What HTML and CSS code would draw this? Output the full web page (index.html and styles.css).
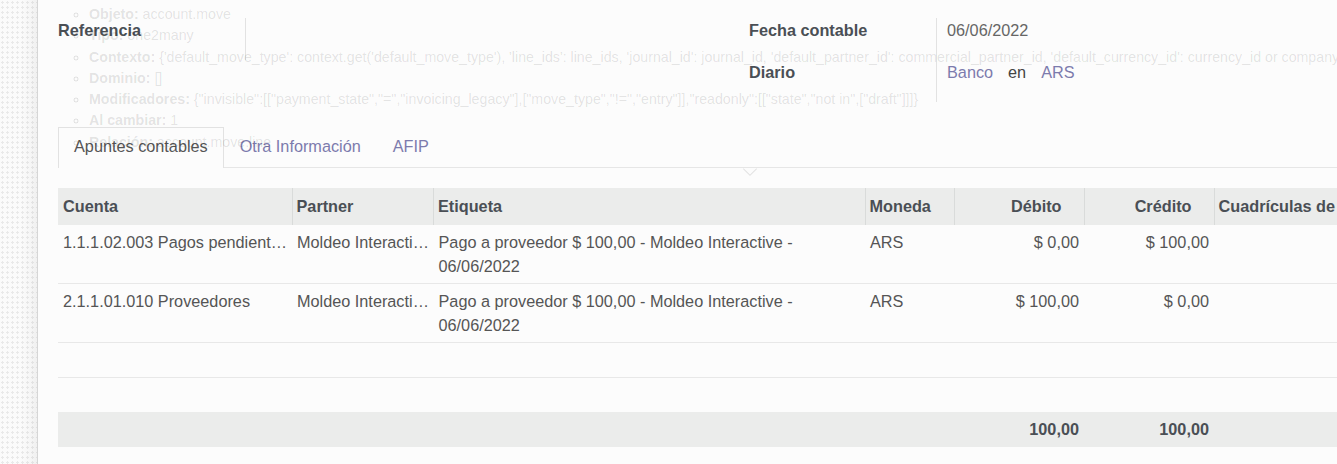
FILE: index.html
```html
<!DOCTYPE html>
<html lang="es">
<head>
    <meta charset="UTF-8">
    <title>Asiento contable</title>
    <link rel="stylesheet" href="styles.css">
</head>
<body>
    <div class="rail"></div>

    <main class="sheet">
        <div class="groups">
            <div class="group">
                <div class="field">
                    <div class="label">Referencia</div>
                    <div class="value"></div>
                </div>
            </div>
            <div class="group">
                <div class="field">
                    <div class="label">Fecha contable</div>
                    <div class="value muted">06/06/2022</div>
                </div>
                <div class="field">
                    <div class="label">Diario</div>
                    <div class="value"><a class="link">Banco</a><span class="sep">en</span><a class="link">ARS</a></div>
                </div>
            </div>
        </div>

        <ul class="tabs">
            <li class="tab active">Apuntes contables</li>
            <li class="tab">Otra Información</li>
            <li class="tab">AFIP</li>
        </ul>

        <table class="lines">
            <colgroup>
                <col style="width:234px">
                <col style="width:141.5px">
                <col style="width:431.5px">
                <col style="width:89px">
                <col style="width:130px">
                <col style="width:130px">
                <col style="width:260px">
            </colgroup>
            <thead>
                <tr>
                    <th>Cuenta</th>
                    <th>Partner</th>
                    <th>Etiqueta</th>
                    <th>Moneda</th>
                    <th class="num">Débito</th>
                    <th class="num">Crédito</th>
                    <th>Cuadrículas de impuestos</th>
                </tr>
            </thead>
            <tbody>
                <tr>
                    <td class="clip">1.1.1.02.003 Pagos pendientes</td>
                    <td class="clip">Moldeo Interactive</td>
                    <td>Pago a proveedor $ 100,00 - Moldeo Interactive - 06/06/2022</td>
                    <td>ARS</td>
                    <td class="num">$ 0,00</td>
                    <td class="num">$ 100,00</td>
                    <td></td>
                </tr>
                <tr>
                    <td class="clip">2.1.1.01.010 Proveedores</td>
                    <td class="clip">Moldeo Interactive</td>
                    <td>Pago a proveedor $ 100,00 - Moldeo Interactive - 06/06/2022</td>
                    <td>ARS</td>
                    <td class="num">$ 100,00</td>
                    <td class="num">$ 0,00</td>
                    <td></td>
                </tr>
                <tr class="filler"><td colspan="7"></td></tr>
                <tr class="filler last"><td colspan="7"></td></tr>
            </tbody>
            <tfoot>
                <tr>
                    <td colspan="4"></td>
                    <td class="num">100,00</td>
                    <td class="num">100,00</td>
                    <td></td>
                </tr>
            </tfoot>
        </table>
    </main>

    <!-- tooltip fading out over the form -->
    <ul class="tip">
        <li><b>Objeto:</b> account.move</li>
        <li><b>Tipo:</b> one2many</li>
        <li><b>Contexto:</b> {'default_move_type': context.get('default_move_type'), 'line_ids': line_ids, 'journal_id': journal_id, 'default_partner_id': commercial_partner_id, 'default_currency_id': currency_id or company_id.currency_id}</li>
        <li><b>Dominio:</b> []</li>
        <li><b>Modificadores:</b> {"invisible":[["payment_state","=","invoicing_legacy"],["move_type","!=","entry"]],"readonly":[["state","not in",["draft"]]]}</li>
        <li><b>Al cambiar:</b> 1</li>
        <li><b>Relación:</b> account.move.line</li>
    </ul>
    <span class="tip-arrow"></span>
</body>
</html>
```

FILE: styles.css
```css
body {
    margin: 0;
    height: 464px;
    overflow: hidden;
    display: flex;
    background: #fcfcfc;
    font-family: "Liberation Sans", Arial, sans-serif;
    font-size: 16.25px;
    line-height: 24px;
    color: #555;
}
.rail {
    flex: none;
    width: 37px;
    border-right: 1px solid #d6d6d6;
    background:
        linear-gradient(to right, rgba(0, 0, 0, 0) 20px, rgba(0, 0, 0, 0.02) 30px, rgba(0, 0, 0, 0.045) 37px),
        radial-gradient(circle, #e9e9e9 1px, transparent 1.4px) 0 0 / 5px 5px,
        #fbfbfb;
}
.sheet {
    flex: 1;
    min-width: 0;
    padding: 18px 0 0 20px;
}

/* header groups */
.groups {
    display: flex;
}
.group {
    width: 691px;
    flex: none;
}
.field {
    display: flex;
    height: 42px;
}
.label {
    width: 188px;
    box-sizing: border-box;
    border-right: 1px solid #e2e2e2;
    font-weight: bold;
    color: #4a4f55;
}
.value {
    padding-left: 10px;
    color: #444;
}
.value.muted { color: #666; }
.link { color: #7c7bad; }
.sep { margin: 0 15px; }

/* tabs */
.tabs {
    list-style: none;
    margin: 25px 0 0;
    padding: 0;
    display: flex;
    border-bottom: 1px solid #e6e6e6;
}
.tab {
    padding: 0 15px 3px;
    line-height: 36px;
    border: 1px solid transparent;
    border-bottom: none;
    color: #7c7bad;
}
.tab.active {
    color: #555;
    border-color: #e2e2e2;
    background: #fcfcfc;
    margin-bottom: -1px;
    padding-bottom: 4px;
}

/* lines table */
.lines {
    margin-top: 20px;
    width: 1416px;
    table-layout: fixed;
    border-collapse: collapse;
}
.lines th {
    background: #ebeceb;
    font-weight: bold;
    color: #4a4f55;
    text-align: left;
    padding: 6px 5px 7px;
    white-space: nowrap;
    overflow: hidden;
}
.lines th + th {
    border-left: 1px solid #d9dbda;
    padding-left: 4px;
}
.lines th.num {
    text-align: right;
    padding-right: 22px;
}
.lines td {
    padding: 5px;
    vertical-align: top;
    border-bottom: 1px solid #e8e8e8;
}
.lines td.num { text-align: right; }
.lines td.clip {
    white-space: nowrap;
    overflow: hidden;
    text-overflow: ellipsis;
    padding-right: 4.5px;
}
.lines tr.filler td { height: 24px; }
.lines tr.filler.last td { border-bottom: none; }
.lines tfoot td {
    background: #ebeceb;
    font-weight: bold;
    color: #4a4f55;
    border: none;
    padding: 5px 5px 6px;
}

/* tooltip */
.tip {
    position: absolute;
    top: 4px;
    left: 89px;
    margin: 0;
    padding: 0;
    list-style: circle;
    font-size: 14.2px;
    line-height: 21.3px;
    color: rgba(0, 0, 0, 0.11);
    white-space: nowrap;
    pointer-events: none;
}
.tip-arrow {
    position: absolute;
    left: 745px;
    top: 164px;
    width: 9px;
    height: 9px;
    border-right: 1px solid rgba(0, 0, 0, 0.1);
    border-bottom: 1px solid rgba(0, 0, 0, 0.1);
    transform: rotate(45deg);
}
```
